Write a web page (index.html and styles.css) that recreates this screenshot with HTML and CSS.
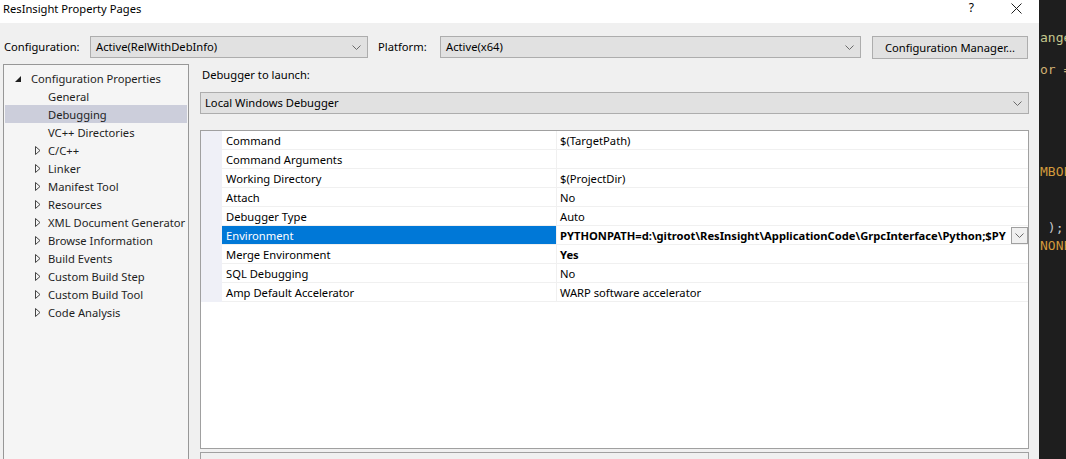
FILE: index.html
```html
<!DOCTYPE html>
<html>
<head>
<meta charset="utf-8">
<title>ResInsight Property Pages</title>
<link rel="stylesheet" href="styles.css">
</head>
<body>
<div class="dialog">
  <div class="titlebar">
    <span class="title">ResInsight Property Pages</span>
    <span class="help">?</span>
    <svg class="close" width="11" height="11" viewBox="0 0 11 11"><path d="M0.5 0.5 L10.5 10.5 M10.5 0.5 L0.5 10.5" stroke="#1e1e1e" stroke-width="1" fill="none"/></svg>
  </div>

  <div class="toolbar">
    <span class="lbl lbl-config">Configuration:</span>
    <div class="combo combo-config">
      <span class="combo-text">Active(RelWithDebInfo)</span>
      <svg class="chev" width="9" height="5" viewBox="0 0 9 5"><path d="M0.5 0.5 L4.5 4.5 L8.5 0.5" stroke="#6a6a6a" fill="none"/></svg>
    </div>
    <span class="lbl lbl-platform">Platform:</span>
    <div class="combo combo-platform">
      <span class="combo-text">Active(x64)</span>
      <svg class="chev" width="9" height="5" viewBox="0 0 9 5"><path d="M0.5 0.5 L4.5 4.5 L8.5 0.5" stroke="#6a6a6a" fill="none"/></svg>
    </div>
    <button class="btn">Configuration Manager...</button>
  </div>

  <div class="main">
    <div class="tree">
      <div class="node root">
        <svg class="exp-open" width="6" height="6" viewBox="0 0 6 6"><polygon points="6,0 6,6 0,6" fill="#1e1e1e"/></svg>
        <span>Configuration Properties</span>
      </div>
      <div class="node child"><span class="noexp"></span><span>General</span></div>
      <div class="node child selected"><span class="noexp"></span><span>Debugging</span></div>
      <div class="node child"><span class="noexp"></span><span>VC++ Directories</span></div>
      <div class="node child"><svg class="exp" width="6" height="9" viewBox="0 0 6 9"><path d="M0.5 0.5 L5 4.5 L0.5 8.5 Z" stroke="#444" fill="none"/></svg><span>C/C++</span></div>
      <div class="node child"><svg class="exp" width="6" height="9" viewBox="0 0 6 9"><path d="M0.5 0.5 L5 4.5 L0.5 8.5 Z" stroke="#444" fill="none"/></svg><span>Linker</span></div>
      <div class="node child"><svg class="exp" width="6" height="9" viewBox="0 0 6 9"><path d="M0.5 0.5 L5 4.5 L0.5 8.5 Z" stroke="#444" fill="none"/></svg><span>Manifest Tool</span></div>
      <div class="node child"><svg class="exp" width="6" height="9" viewBox="0 0 6 9"><path d="M0.5 0.5 L5 4.5 L0.5 8.5 Z" stroke="#444" fill="none"/></svg><span>Resources</span></div>
      <div class="node child"><svg class="exp" width="6" height="9" viewBox="0 0 6 9"><path d="M0.5 0.5 L5 4.5 L0.5 8.5 Z" stroke="#444" fill="none"/></svg><span>XML Document Generator</span></div>
      <div class="node child"><svg class="exp" width="6" height="9" viewBox="0 0 6 9"><path d="M0.5 0.5 L5 4.5 L0.5 8.5 Z" stroke="#444" fill="none"/></svg><span>Browse Information</span></div>
      <div class="node child"><svg class="exp" width="6" height="9" viewBox="0 0 6 9"><path d="M0.5 0.5 L5 4.5 L0.5 8.5 Z" stroke="#444" fill="none"/></svg><span>Build Events</span></div>
      <div class="node child"><svg class="exp" width="6" height="9" viewBox="0 0 6 9"><path d="M0.5 0.5 L5 4.5 L0.5 8.5 Z" stroke="#444" fill="none"/></svg><span>Custom Build Step</span></div>
      <div class="node child"><svg class="exp" width="6" height="9" viewBox="0 0 6 9"><path d="M0.5 0.5 L5 4.5 L0.5 8.5 Z" stroke="#444" fill="none"/></svg><span>Custom Build Tool</span></div>
      <div class="node child"><svg class="exp" width="6" height="9" viewBox="0 0 6 9"><path d="M0.5 0.5 L5 4.5 L0.5 8.5 Z" stroke="#444" fill="none"/></svg><span>Code Analysis</span></div>
    </div>

    <div class="content">
      <div class="section-label">Debugger to launch:</div>
      <div class="combo combo-debugger">
        <span class="combo-text">Local Windows Debugger</span>
        <svg class="chev" width="9" height="5" viewBox="0 0 9 5"><path d="M0.5 0.5 L4.5 4.5 L8.5 0.5" stroke="#6a6a6a" fill="none"/></svg>
      </div>

      <div class="grid">
        <div class="row"><div class="gutter"></div><div class="name">Command</div><div class="value">$(TargetPath)</div></div>
        <div class="row"><div class="gutter"></div><div class="name">Command Arguments</div><div class="value"></div></div>
        <div class="row"><div class="gutter"></div><div class="name">Working Directory</div><div class="value">$(ProjectDir)</div></div>
        <div class="row"><div class="gutter"></div><div class="name">Attach</div><div class="value">No</div></div>
        <div class="row"><div class="gutter"></div><div class="name">Debugger Type</div><div class="value">Auto</div></div>
        <div class="row row-selected"><div class="gutter"></div><div class="name">Environment</div><div class="value bold"><span class="value-text">PYTHONPATH=d:\gitroot\ResInsight\ApplicationCode\GrpcInterface\Python;$PY</span><span class="drop"><svg width="9" height="5" viewBox="0 0 9 5"><path d="M0.5 0.5 L4.5 4.5 L8.5 0.5" stroke="#6a6a6a" fill="none"/></svg></span></div></div>
        <div class="row"><div class="gutter"></div><div class="name">Merge Environment</div><div class="value bold">Yes</div></div>
        <div class="row"><div class="gutter"></div><div class="name">SQL Debugging</div><div class="value">No</div></div>
        <div class="row"><div class="gutter"></div><div class="name">Amp Default Accelerator</div><div class="value">WARP software accelerator</div></div>
      </div>

      <div class="desc">
        <div class="desc-title">Environment</div>
      </div>
    </div>
  </div>
</div>

<div class="editor">
  <div class="code c-fn l-a">ange</div>
  <div class="code c-var l-b">or =</div>
  <div class="code c-macro l-c">MBOL</div>
  <div class="code c-punc l-d">&nbsp;);</div>
  <div class="code c-macro l-e">NONE</div>
</div>
</body>
</html>
```

FILE: styles.css
```css
* { box-sizing: border-box; }

html, body {
  margin: 0;
  padding: 0;
}

body {
  width: 1066px;
  height: 459px;
  overflow: hidden;
  display: flex;
  background: #1e1e1e;
  font-family: "Noto Sans", "Open Sans", sans-serif;
  font-size: 11.2px;
  color: #000;
}

/* ---------- dialog ---------- */
.dialog {
  flex: none;
  width: 1039px;
  height: 459px;
  background: #f0f0f0;
  display: flex;
  flex-direction: column;
  overflow: hidden;
}

.titlebar {
  flex: none;
  height: 23px;
  background: #fff;
  display: flex;
  align-items: flex-start;
  padding: 1px 17px 0 3px;
}

.title {
  flex: 1;
  line-height: 16px;
}

.help {
  line-height: 14px;
  font-size: 12px;
  margin-right: 37px;
}

.close {
  margin-top: 2px;
}

.toolbar {
  flex: none;
  height: 41px;
  display: flex;
  align-items: flex-start;
  padding: 13px 0 0 4px;
}

.lbl {
  line-height: 22px;
  flex: none;
}

.lbl-config { width: 86px; }
.lbl-platform { width: 62px; margin-left: 10px; }

.combo {
  flex: none;
  height: 22px;
  background: #e1e1e1;
  border: 1px solid #adadad;
  display: flex;
  align-items: center;
  padding: 0 6px 0 5px;
}

.combo-text {
  flex: 1;
  line-height: 18px;
  white-space: nowrap;
}

.chev { flex: none; }

.combo-config { width: 278px; }
.combo-platform { width: 421px; }

.btn {
  flex: none;
  margin-left: 11px;
  width: 156px;
  height: 23px;
  background: #e1e1e1;
  border: 1px solid #adadad;
  font: inherit;
  color: #000;
  padding: 0;
}

/* ---------- main ---------- */
.main {
  flex: 1;
  display: flex;
  padding-left: 3px;
  min-height: 0;
}

.tree {
  flex: none;
  width: 186px;
  height: 420px;
  background: #f5f5f5;
  border: 1px solid #979797;
  padding: 4px 1px 0 1px;
}

.node {
  height: 18px;
  display: flex;
  align-items: center;
  white-space: nowrap;
  color: #1e1e1e;
}

.root { padding-left: 10px; }
.root .exp-open { margin-right: 10px; margin-top: 2px; }

.child { padding-left: 30px; }
.noexp { width: 6px; flex: none; }
.exp { flex: none; }
.child span:last-child, .child svg + span { margin-left: 7px; }

.selected { background: #cccedb; }

/* ---------- content ---------- */
.content {
  flex: none;
  width: 829px;
  margin-left: 11px;
  display: flex;
  flex-direction: column;
}

.section-label {
  line-height: 16px;
  margin-top: 3px;
  padding-left: 2px;
}

.combo-debugger {
  margin-top: 9px;
  width: 829px;
  padding-left: 4px;
}

.grid {
  flex: none;
  margin-top: 16px;
  height: 319px;
  background: #fff;
  border: 1px solid #a0a0a0;
  display: flex;
  flex-direction: column;
}

.row {
  display: flex;
  height: 19px;
}

.gutter {
  flex: none;
  width: 21px;
  background: #eff0f7;
}

.name {
  flex: none;
  width: 335px;
  padding: 1px 0 0 4px;
  line-height: 17px;
  border-bottom: 1px solid #f0f0f0;
  border-right: 1px solid #f0f0f0;
  white-space: nowrap;
}

.value {
  flex: 1;
  min-width: 0;
  display: flex;
  align-items: flex-start;
  padding: 1px 0 0 3px;
  line-height: 17px;
  border-bottom: 1px solid #f0f0f0;
  white-space: nowrap;
  overflow: hidden;
}

.value-text {
  flex: 1;
  min-width: 0;
  overflow: hidden;
}

.bold { font-weight: bold; }

.row-selected .name {
  background: #0078d7;
  color: #fff;
}

.drop {
  flex: none;
  width: 17px;
  height: 17px;
  margin-top: 0;
  border: 1px solid #a0a0a0;
  background: #f0f0f0;
  display: flex;
  align-items: center;
  justify-content: center;
}

.desc {
  flex: none;
  margin-top: 3px;
  height: 60px;
  border: 1px solid #a0a0a0;
  background: #f0f0f0;
  padding: 3px 0 0 5px;
}

.desc-title {
  font-weight: bold;
  line-height: 16px;
}

/* ---------- editor strip ---------- */
.editor {
  flex: 1;
  background: #1e1e1e;
  overflow: hidden;
  padding-left: 1px;
  font-family: "DejaVu Sans Mono", monospace;
  font-size: 13px;
  display: flex;
  flex-direction: column;
}

.code {
  line-height: 15px;
  height: 15px;
  white-space: nowrap;
}

.l-a { margin-top: 30px; }
.l-b { margin-top: 17px; }
.l-c { margin-top: 87px; }
.l-d { margin-top: 41px; }
.l-e { margin-top: 3px; }

.c-fn { color: #c4c78e; }
.c-var { color: #d0b073; }
.c-macro { color: #d39a3c; }
.c-punc { color: #c8c8c8; }
```
